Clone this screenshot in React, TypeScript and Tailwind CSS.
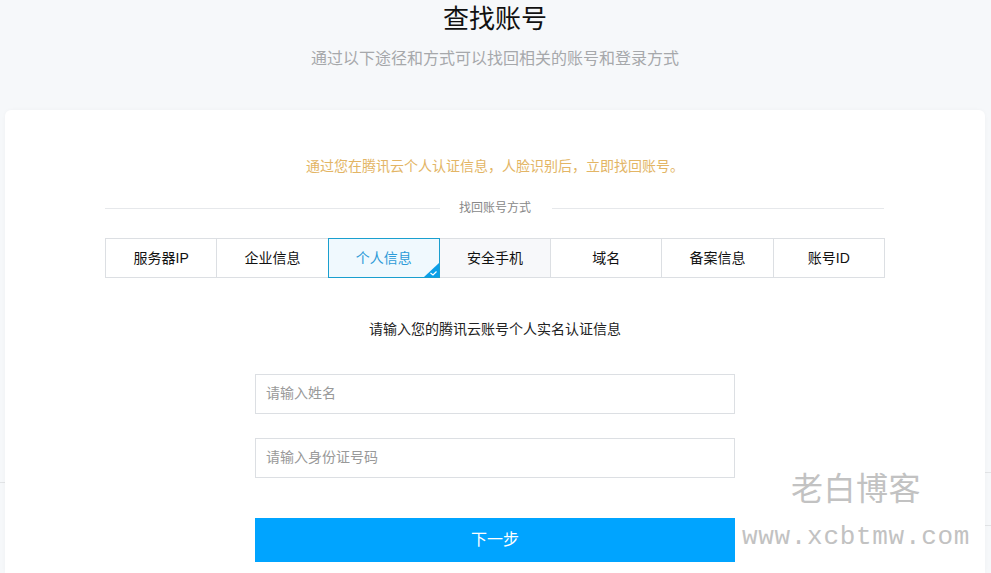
const font = "font-['Liberation_Sans','Noto_Sans_CJK_SC',sans-serif]";

const tabs = ["服务器IP", "企业信息", "个人信息", "安全手机", "域名", "备案信息", "账号ID"];

function Tab({ label }: { label: string }) {
  if (label === "个人信息") {
    return (
      <div className="relative z-10 -ml-px flex flex-1 items-center justify-center border border-[#1a9fcf] bg-[#f0f9fe] text-[14px] text-[#2d9bd8]">
        {label}
        <svg className="absolute right-0 bottom-0" width="15" height="14" viewBox="0 0 15 14">
          <path d="M15 0V14H0Z" fill="#0a9fe8" />
          <path d="M6.5 10L9 12L12.5 8.5" fill="none" stroke="#fff" strokeWidth="1.2" />
        </svg>
      </div>
    );
  }
  return (
    <div
      className={
        label === "安全手机"
          ? "-ml-px flex flex-1 items-center justify-center border border-[#dcdfe3] bg-[#f7f8fa] text-[14px] text-[#111]"
          : "-ml-px flex flex-1 items-center justify-center border border-[#dcdfe3] bg-white text-[14px] text-[#111] first:ml-0"
      }
    >
      {label}
    </div>
  );
}

export default function App() {
  return (
    <div className={`${font} relative h-[573px] overflow-hidden bg-[#f6f8fa]`}>
      {/* faint lines of the page behind the card */}
      <div className="absolute top-[482px] left-0 h-px w-[5px] bg-[#e2e4e6]" />
      <div className="absolute top-[472px] right-0 h-px w-[6px] bg-[#e2e4e6]" />
      <div className="absolute top-[525px] right-0 h-px w-[6px] bg-[#e2e4e6]" />

      <div className="flex h-[110px] w-[990px] flex-col items-center">
        <h1 className="text-[26px] leading-[38px] font-normal text-[#111]">查找账号</h1>
        <p className="mt-[9px] text-[16px] leading-[24px] text-[#a6a8ab]">
          通过以下途径和方式可以找回相关的账号和登录方式
        </p>
      </div>

      <div className="relative ml-[5px] flex h-[463px] w-[980px] flex-col items-center rounded-t-md bg-white pt-[46px] shadow-[0_0_4px_rgba(0,0,0,0.03)]">
        <p className="text-[14px] leading-[20px] text-[#e3b565]">
          通过您在腾讯云个人认证信息，人脸识别后，立即找回账号。
        </p>

        <div className="mt-[22px] flex h-[20px] w-[780px] items-center">
          <div className="h-px w-[335px] bg-[#e6e8eb]" />
          <span className="pr-[21px] pl-[19px] text-[12px] text-[#888]">找回账号方式</span>
          <div className="h-px w-[332px] bg-[#e6e8eb]" />
        </div>

        <div className="mt-[20px] flex h-[40px] w-[780px]">
          {tabs.map((t) => (
            <Tab key={t} label={t} />
          ))}
        </div>

        <p className="mt-[41px] text-[14px] leading-[20px] text-[#222]">请输入您的腾讯云账号个人实名认证信息</p>

        <div className="mt-[35px] flex w-[480px] flex-col gap-[24px]">
          <input
            placeholder="请输入姓名"
            className="h-[40px] w-full border border-[#dcdfe3] px-[10px] pb-[2px] text-[14px] outline-none placeholder:text-[#999]"
          />
          <input
            placeholder="请输入身份证号码"
            className="h-[40px] w-full border border-[#dcdfe3] px-[10px] pb-[2px] text-[14px] outline-none placeholder:text-[#999]"
          />
          <button className="mt-[16px] h-[44px] w-full bg-[#00a4ff] text-[16px] text-white">下一步</button>
        </div>
      </div>

      {/* watermark */}
      <div className="absolute top-[468px] left-[741px] flex w-[230px] flex-col items-center text-[#c2c2c2]">
        <span className="text-[32px] leading-[42px] tracking-[0.5px]">老白博客</span>
        <span className="mt-[11px] font-['Liberation_Mono',monospace] text-[26px] leading-[32px] tracking-[0.7px] whitespace-nowrap">
          www.xcbtmw.com
        </span>
      </div>
    </div>
  );
}
